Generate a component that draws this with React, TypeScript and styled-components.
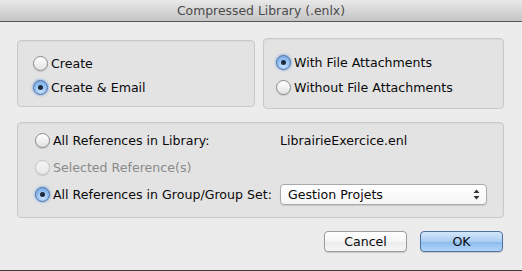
import React from "react";
import styled, { createGlobalStyle } from "styled-components";

const Global = createGlobalStyle`
  html, body { margin: 0; padding: 0; background: #ececec; }
  body { font-family: "DejaVu Sans", "Liberation Sans", sans-serif; }
`;

const Window = styled.div`
  width: 522px;
  height: 271px;
  box-sizing: border-box;
  background: #ececec;
  border-bottom: 1px solid #3a3a3a;
  display: flex;
  flex-direction: column;
  overflow: hidden;
`;

const TitleBar = styled.div`
  height: 22px;
  box-sizing: border-box;
  background: linear-gradient(#e9e9e9, #d3d3d3 60%, #c6c6c6);
  border-bottom: 1px solid #585858;
  display: flex;
  align-items: center;
  justify-content: center;
  font-size: 12.4px;
  color: #4a4a4a;
`;

const Body = styled.div`
  flex: 1;
  display: flex;
  flex-direction: column;
  padding: 16px 18px 0 17px;
`;

const TopRow = styled.div`
  display: flex;
  align-items: center;
  gap: 8px;
`;

const Box = styled.div<{ $w?: number; $h: number }>`
  box-sizing: border-box;
  ${(p) => (p.$w ? `width: ${p.$w}px;` : "")}
  height: ${(p) => p.$h}px;
  background: #e3e3e3;
  border: 1px solid #c9c9c9;
  border-radius: 4px;
  box-shadow: inset 0 1px 1px rgba(0, 0, 0, 0.04);
`;

const RadioStack = styled.div<{ $pt: number; $pl: number; $gap: number }>`
  display: flex;
  flex-direction: column;
  gap: ${(p) => p.$gap}px;
  padding: ${(p) => p.$pt}px 0 0 ${(p) => p.$pl}px;
`;

const RadioRow = styled.div<{ $disabled?: boolean }>`
  display: flex;
  align-items: center;
  height: 18px;
  font-size: 12.6px;
  color: ${(p) => (p.$disabled ? "#8a8a8a" : "#0a0a0a")};
  white-space: nowrap;
`;

const Circle = styled.span<{ $on?: boolean; $disabled?: boolean }>`
  box-sizing: border-box;
  width: 15px;
  height: 15px;
  border-radius: 50%;
  margin-right: 3px;
  flex: none;
  display: flex;
  align-items: center;
  justify-content: center;
  border: 1px solid
    ${(p) => (p.$on ? "#4d6fa3" : p.$disabled ? "#c2c2c2" : "#8a8a8a")};
  background: ${(p) =>
    p.$on
      ? "radial-gradient(circle at 50% 70%, #cfe6ff, #8fbdf0 55%, #6d9fdc)"
      : p.$disabled
      ? "linear-gradient(#f4f4f4, #e9e9e9)"
      : "linear-gradient(#ffffff, #f1f1f1 50%, #e2e2e2)"};
  box-shadow: ${(p) =>
    p.$on ? "0 0 2px 1px rgba(110,160,230,0.55)" : "0 1px 1px rgba(0,0,0,0.12)"};
  &::after {
    content: "";
    display: ${(p) => (p.$on ? "block" : "none")};
    width: 5px;
    height: 5px;
    border-radius: 50%;
    background: #1c2a3c;
  }
`;

function Radio({
  label,
  on,
  disabled,
}: {
  label: string;
  on?: boolean;
  disabled?: boolean;
}) {
  return (
    <RadioRow $disabled={disabled}>
      <Circle $on={on} $disabled={disabled} />
      {label}
    </RadioRow>
  );
}

const ScopeBox = styled(Box)`
  margin-top: 13px;
  display: grid;
  grid-template-columns: 245px 207px;
  grid-auto-rows: 18px;
  row-gap: 9px;
  align-items: center;
  padding: 8px 0 0 17px;
`;

const Value = styled.div`
  font-size: 12.6px;
  color: #0a0a0a;
`;

const Popup = styled.div`
  box-sizing: border-box;
  height: 21px;
  margin-top: 1px;
  background: linear-gradient(#ffffff, #f6f6f6);
  border: 1px solid #a9a9a9;
  border-radius: 4px;
  box-shadow: 0 1px 1px rgba(0, 0, 0, 0.12);
  display: flex;
  align-items: center;
  justify-content: space-between;
  padding: 0 6px 0 7px;
  font-size: 12.6px;
  color: #0a0a0a;
`;

const Buttons = styled.div`
  display: flex;
  justify-content: flex-end;
  gap: 13px;
  margin-top: 13px;
  padding-right: 1px;
`;

const Button = styled.div<{ $primary?: boolean }>`
  box-sizing: border-box;
  width: 83px;
  height: 21px;
  border-radius: 4px;
  display: flex;
  align-items: center;
  justify-content: center;
  font-size: 12.6px;
  color: #0a0a0a;
  border: 1px solid ${(p) => (p.$primary ? "#4f6f9f" : "#9c9c9c")};
  background: ${(p) =>
    p.$primary
      ? "linear-gradient(#d4e7fb, #a9cdf3 50%, #8ab9ee 51%, #b2d6fa)"
      : "linear-gradient(#ffffff, #f5f5f5 50%, #ebebeb 51%, #f7f7f7)"};
  box-shadow: 0 1px 1px rgba(0, 0, 0, 0.15);
`;

function Arrows() {
  return (
    <svg width="7" height="11" viewBox="0 0 7 11">
      <path d="M3.5 0.5 L6.5 4 L0.5 4 Z" fill="#333" />
      <path d="M3.5 10.5 L6.5 7 L0.5 7 Z" fill="#333" />
    </svg>
  );
}

export default function App() {
  return (
    <>
      <Global />
      <Window>
        <TitleBar>Compressed Library (.enlx)</TitleBar>
        <Body>
          <TopRow>
            <Box $w={238} $h={67}>
              <RadioStack $pt={13} $pl={15} $gap={6}>
                <Radio label="Create" />
                <Radio label="Create & Email" on />
              </RadioStack>
            </Box>
            <Box $w={241} $h={71}>
              <RadioStack $pt={14} $pl={12} $gap={7}>
                <Radio label="With File Attachments" on />
                <Radio label="Without File Attachments" />
              </RadioStack>
            </Box>
          </TopRow>
          <ScopeBox $h={96}>
            <Radio label="All References in Library:" />
            <Value>LibrairieExercice.enl</Value>
            <Radio label="Selected Reference(s)" disabled />
            <div />
            <Radio label="All References in Group/Group Set:" on />
            <Popup>
              Gestion Projets
              <Arrows />
            </Popup>
          </ScopeBox>
          <Buttons>
            <Button>Cancel</Button>
            <Button $primary>OK</Button>
          </Buttons>
        </Body>
      </Window>
    </>
  );
}
